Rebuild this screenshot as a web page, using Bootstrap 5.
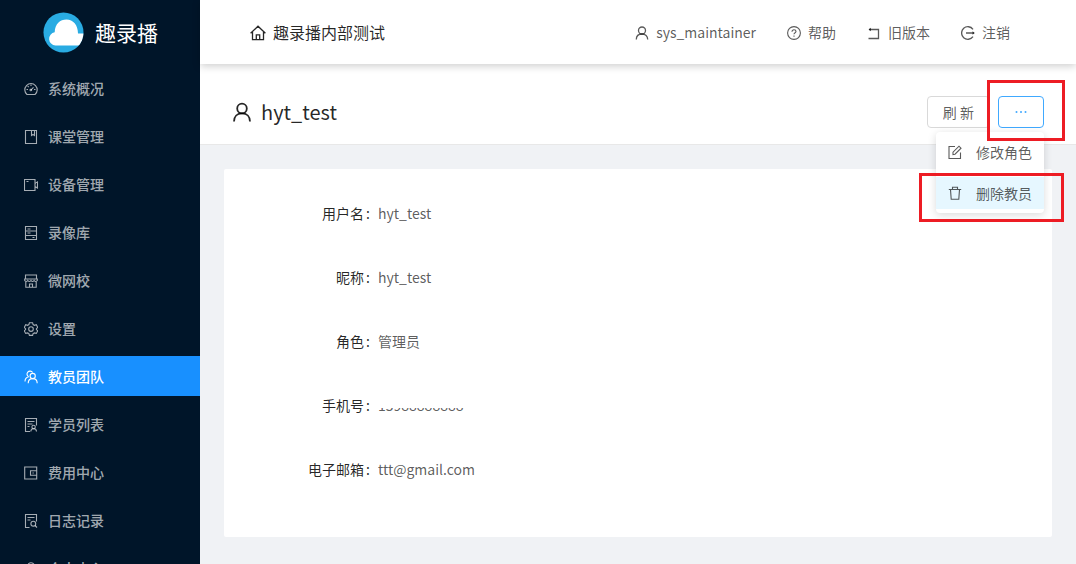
<!DOCTYPE html>
<html lang="zh-CN">
<head>
<meta charset="utf-8">
<meta name="viewport" content="width=device-width, initial-scale=1">
<title>趣录播</title>
<link href="https://cdn.jsdelivr.net/npm/bootstrap@5.3.0/dist/css/bootstrap.min.css" rel="stylesheet">
<style>
  body { font-family: "Noto Sans CJK SC", sans-serif; font-size: 14px; line-height: 22px; color: rgba(0,0,0,.65); background: #f0f2f5; }
  svg { fill: none; stroke: currentColor; stroke-width: 1.1; display: block; flex: none; }
  svg.bold-line { stroke-width: 1.8; }
  svg.mid-line { stroke-width: 1.3; }
  .side { width: 200px; background: #001529; }
  .brand { height: 64px; color: #fff; font-size: 21px; gap: 11px; padding-left: 43px; margin-bottom: 4px; }
  .side .nav { gap: 8px; }
  .side .nav-link { height: 40px; padding: 0 24px; gap: 10px; color: rgba(255,255,255,.65); font-weight: 500; }
  .side .nav-link.active { background: #1890ff; color: #fff; }
  .side .nav-link svg, .topbar svg { margin-top: 2px; }
  .topbar { height: 64px; padding: 0 66px 0 50px; box-shadow: 0 2px 8px rgba(0,0,0,.2); z-index: 2; }
  .site { font-size: 16px; color: rgba(0,0,0,.85); gap: 7px; }
  .tools { gap: 31px; }
  .tools a { color: inherit; gap: 7px; }
  .pagehead { height: 81px; padding: 16px 32px 0 33px; border-bottom: 1px solid #e8e8e8; }
  .pagehead h1 { font-size: 20px; font-weight: 400; line-height: 28px; color: rgba(0,0,0,.85); gap: 10px; }
  .tool-btn { height: 32px; padding: 0 15px; font-size: 14px; line-height: 22px; background: #fff; border: 1px solid #d9d9d9; border-radius: 4px; color: inherit; }
  .tool-btn.more { width: 46px; padding: 0; border-color: #40a9ff; color: #40a9ff; }
  .drop { right: 0; top: 36px; width: 108px; background: #fff; border-radius: 4px; padding: 4px 0; gap: 9px; box-shadow: 0 2px 8px rgba(0,0,0,.15); z-index: 3; }
  .drop button { height: 32px; padding: 0 12px; border: 0; background: none; color: inherit; gap: 14px; }
  .drop button.hot { background: #e6f7ff; }
  .marker { border: 3px solid #ed1c24; pointer-events: none; z-index: 4; }
  .mark-more { inset: -16px -21px -13px -11px; }
  .mark-del { inset: -4px -20px -13px -17px; }
  .panel { background: #fff; margin: 24px; padding: 31px 24px 55px; border-radius: 2px; }
  .info { display: grid; grid-template-columns: 130px 1fr; row-gap: 38px; line-height: 26px; }
  .info dt { font-weight: 400; color: rgba(0,0,0,.85); text-align: right; padding-right: 8px; }
  .info dt::after { content: ":"; margin-left: 2px; }
  .masked::after { content: ""; position: absolute; left: 0; right: 0; top: 0; height: 16px; background: #fff; }
</style>
</head>
<body>
<div class="d-flex vh-100 overflow-hidden">
  <aside class="side flex-shrink-0 overflow-hidden">
    <div class="brand d-flex align-items-center">
      <svg width="41" height="41" viewBox="0 0 41 41"><defs><clipPath id="disc"><circle cx="20.5" cy="20.5" r="20"/></clipPath></defs><circle cx="20.5" cy="20.5" r="20" fill="#29abe2" stroke="none"/><g clip-path="url(#disc)" fill="#fff" stroke="none"><path d="M12.500 33.500a6.700 6.700 0 0 1-.8-13.300C12 12 17 7.500 23.500 7.500S35 13 35 21.500H41v12z"/></g></svg>
      <span>趣录播</span>
    </div>
    <nav class="nav flex-column flex-nowrap">
      <a href="#" class="nav-link d-flex align-items-center"><svg width="14" height="14" viewBox="0 0 14 14"><path d="M3 12.500a6.200 6.200 0 1 1 8 0zM7 8l2.500-2.700M2.500 7.500H4M10 7.500h1.500M7 2.500V4M3.700 4.200l1 1"/><circle cx="6.800" cy="8" r=".8"/></svg>系统概况</a>
      <a href="#" class="nav-link d-flex align-items-center"><svg width="14" height="14" viewBox="0 0 14 14"><path d="M1.500.5h11v13h-11zM7.500.5v5l1.500-1 1.500 1v-5"/></svg>课堂管理</a>
      <a href="#" class="nav-link d-flex align-items-center"><svg width="14" height="14" viewBox="0 0 14 14"><path d="M.5 1.500h10.500v11H.5zM11 5.500l2.500-1.500v6L11 8.500M2.500 3.500h2"/></svg>设备管理</a>
      <a href="#" class="nav-link d-flex align-items-center"><svg width="14" height="14" viewBox="0 0 14 14"><path d="M1.500.5h11v13h-11zM1.500 5h11M1.500 9.500h11M3.500 3h3M3.500 7h3M8.500 11.500h2"/></svg>录像库</a>
      <a href="#" class="nav-link d-flex align-items-center"><svg width="14" height="14" viewBox="0 0 14 14"><path d="M1.500 5V1h11v4M.7 5h12.600v1.500q-1.600 2-3.200 0-1.600 2-3.100 0-1.600 2-3.200 0-1.600 2-3.100 0zM1.800 8v5.200h10.400V8M5.500 13v-3h3v3"/></svg>微网校</a>
      <a href="#" class="nav-link d-flex align-items-center"><svg width="14" height="14" viewBox="0 0 14 14"><path d="M5.400.7h3.200l.5 1.900 1.300.7 1.900-.6 1.500 2.700L12.400 6.700v.9l1.400 1.200-1.500 2.600-1.900-.5-1.300.7-.5 1.800H5.400l-.5-1.800-1.300-.7-1.900.5L.2 8.800l1.400-1.200v-.9L.2 5.400l1.500-2.700 1.900.6 1.300-.7z"/><circle cx="7" cy="7.100" r="2.300"/></svg>设置</a>
      <a href="#" class="nav-link active d-flex align-items-center" aria-current="page"><svg width="14" height="14" viewBox="0 0 14 14"><path d="M4.700 6.800A3 3 0 1 1 8.600 2.600M1 11.500c0-2.500 1.500-4.200 3.700-4.700"/><circle cx="8.700" cy="6" r="2.600"/><path d="M4.200 13.200c0-2.500 1.600-4.600 4.500-4.600s4.500 2.100 4.500 4.600"/></svg>教员团队</a>
      <a href="#" class="nav-link d-flex align-items-center"><svg width="14" height="14" viewBox="0 0 14 14"><path d="M6 13.500H1.500V.5h11v7M3.500 3.500h7M3.500 6h5M3.500 8.500h2M6.800 13.500c0-1.500 1-2.800 2.700-2.800s3 1.300 3 2.800"/><circle cx="9.600" cy="9" r="1.700"/></svg>学员列表</a>
      <a href="#" class="nav-link d-flex align-items-center"><svg width="14" height="14" viewBox="0 0 14 14"><path d="M.7 1h12v12H.7zM13 4.800H6.500v4.400H13M8.500 7h1.300"/></svg>费用中心</a>
      <a href="#" class="nav-link d-flex align-items-center"><svg width="14" height="14" viewBox="0 0 14 14"><path d="M5.500 13.500h-4V.5h11v7M3.500 3.500h7M3.500 6h3M11 11.500l2 2"/><circle cx="9.300" cy="9.700" r="2.400"/></svg>日志记录</a>
      <a href="#" class="nav-link d-flex align-items-center"><svg width="14" height="14" viewBox="0 0 14 14"><circle cx="7" cy="4" r="3.200"/><path d="M1 13.500c0-4 2.500-6 6-6s6 2 6 6"/></svg>个人中心</a>
    </nav>
  </aside>
  <div class="flex-grow-1 d-flex flex-column">
    <header class="topbar bg-white d-flex align-items-center justify-content-between position-relative">
      <div class="site d-flex align-items-center">
        <svg class="mid-line" width="16" height="16" viewBox="0 0 16 16"><path d="M.6 8.300 8 1.200l7.400 7.100M2.500 7v7.700h11V7M6.300 14.500V9.800h3.400v4.700"/></svg>
        <span>趣录播内部测试</span>
      </div>
      <nav class="tools d-flex">
        <a href="#" class="d-flex align-items-center text-decoration-none"><svg class="mid-line" width="14" height="14" viewBox="0 0 14 14"><circle cx="7" cy="4.500" r="3.500"/><path d="M1.300 13.500C1.300 10 3.600 8 7 8s5.700 2 5.700 5.500"/></svg>sys_maintainer</a>
        <a href="#" class="d-flex align-items-center text-decoration-none"><svg width="14" height="14" viewBox="0 0 14 14"><circle cx="7" cy="7" r="6.400"/><path d="M5 5.800C5 4.500 5.800 3.800 7 3.800s2 .7 2 1.800-2 1.200-2 2.700M7 9.500v1.200"/></svg>帮助</a>
        <a href="#" class="d-flex align-items-center text-decoration-none"><svg class="mid-line" width="14" height="14" viewBox="0 0 14 14"><path d="M2 3.500h9.500v9H1.500"/><path d="M1.500 3.500 4 1.700v3.600z" fill="currentColor" stroke="none"/></svg>旧版本</a>
        <a href="#" class="d-flex align-items-center text-decoration-none"><svg class="mid-line" width="14" height="14" viewBox="0 0 14 14"><path d="M12 3.300a6.300 6.300 0 1 0 0 7.400M5 7h8"/><path d="M11.500 5.200 13.900 7l-2.400 1.800z" fill="currentColor" stroke="none"/></svg>注销</a>
      </nav>
    </header>
    <div class="pagehead bg-white d-flex align-items-center justify-content-between flex-shrink-0">
      <h1 class="d-flex align-items-center m-0"><svg class="bold-line" width="18" height="20" viewBox="0 0 18 20"><circle cx="9" cy="6.500" r="4.800"/><path d="M1 19.500c0-5 3.200-8.200 8-8.200s8 3.200 8 8.200"/></svg>hyt_test</h1>
      <div class="d-flex position-relative gap-2">
        <button type="button" class="tool-btn">刷 新</button>
        <div class="position-relative">
          <button type="button" class="tool-btn more d-flex align-items-center justify-content-center" aria-label="更多"><svg width="14" height="14" viewBox="0 0 14 14"><g fill="currentColor" stroke="none"><circle cx="2.500" cy="7" r="1"/><circle cx="7" cy="7" r="1"/><circle cx="11.500" cy="7" r="1"/></g></svg></button>
          <span class="marker mark-more position-absolute"></span>
        </div>
        <div class="drop position-absolute d-flex flex-column">
          <button type="button" class="d-flex align-items-center"><svg width="14" height="14" viewBox="0 0 14 14"><path d="M7 1.500H1v12h11.500V7.500M5 9.500V7.200L11 1.200l2 2-6 6z"/></svg>修改角色</button>
          <div class="position-relative d-grid">
            <button type="button" class="hot d-flex align-items-center"><svg width="14" height="14" viewBox="0 0 14 14"><path d="M.8 3.500h12.400M4.500 3.500V1.200h5v2.300M2.500 3.500l.7 9.800h7.600l.7-9.800"/></svg>删除教员</button>
            <span class="marker mark-del position-absolute"></span>
          </div>
        </div>
      </div>
    </div>
    <main class="panel">
      <dl class="info mb-0">
        <dt>用户名</dt><dd class="mb-0">hyt_test</dd>
        <dt>昵称</dt><dd class="mb-0">hyt_test</dd>
        <dt>角色</dt><dd class="mb-0">管理员</dd>
        <dt>手机号</dt><dd class="mb-0 masked position-relative">15988888888</dd>
        <dt>电子邮箱</dt><dd class="mb-0">ttt@gmail.com</dd>
      </dl>
    </main>
  </div>
</div>
<script src="https://cdn.jsdelivr.net/npm/bootstrap@5.3.0/dist/js/bootstrap.bundle.min.js"></script>
</body>
</html>
